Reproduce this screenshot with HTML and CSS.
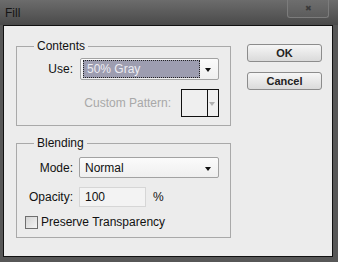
FILE: index.html
```html
<!DOCTYPE html>
<html lang="en">
<head>
  <meta charset="UTF-8" />
  <title>Fill</title>
  <link rel="stylesheet" href="styles.css">
</head>
<body>
  <div class="window">
    <div class="titlebar">
      <span class="title">Fill</span>
      <div class="close-btn"><span class="close-x">&#x2716;</span></div>
    </div>

    <div class="client">
      <div class="left-col">
        <fieldset class="group group-contents">
          <legend>Contents</legend>
          <div class="row">
            <label class="lbl">Use:</label>
            <div class="dropdown use-select">
              <span class="selected">50% Gray</span>
              <span class="arrow"></span>
            </div>
          </div>
          <div class="row pattern-row">
            <label class="lbl disabled">Custom Pattern:</label>
            <div class="pattern-box">
              <div class="swatch"></div>
              <div class="pattern-arrow"><span class="arrow grey"></span></div>
            </div>
          </div>
        </fieldset>

        <fieldset class="group group-blending">
          <legend>Blending</legend>
          <div class="row">
            <label class="lbl">Mode:</label>
            <div class="dropdown mode-select">
              <span class="value">Normal</span>
              <span class="arrow"></span>
            </div>
          </div>
          <div class="row opacity-row">
            <label class="lbl">Opacity:</label>
            <div class="textbox">100</div>
            <span class="unit">%</span>
          </div>
          <div class="check-row">
            <span class="checkbox"></span>
            <span>Preserve Transparency</span>
          </div>
        </fieldset>
      </div>

      <div class="right-col">
        <button class="btn">OK</button>
        <button class="btn">Cancel</button>
      </div>
    </div>
  </div>
</body>
</html>
```

FILE: styles.css
```css
* {
  box-sizing: border-box;
  margin: 0;
  padding: 0;
}

body {
  font-family: "Liberation Sans", Arial, sans-serif;
  font-size: 12px;
  background: #555;
}

.window {
  width: 338px;
  height: 262px;
  background: #575757;
  display: flex;
  flex-direction: column;
}

/* title bar */
.titlebar {
  height: 25px;
  background: linear-gradient(#6c6c6c, #4a4a4a);
  display: flex;
  justify-content: space-between;
  align-items: flex-start;
}

.title {
  color: #151515;
  font-size: 12px;
  padding: 6px 0 0 5px;
}

.close-btn {
  width: 42px;
  height: 18px;
  margin-right: 9px;
  background: linear-gradient(#6e6e6e, #5c5c5c);
  border: 1px solid #7c7c7c;
  border-top: none;
  border-radius: 0 0 3px 3px;
  display: flex;
  align-items: center;
  justify-content: center;
}

.close-x {
  color: #3a3a3a;
  font-size: 8px;
  line-height: 8px;
}

/* dialog body */
.client {
  margin: 0 5px 5px 3px;
  height: 232px;
  border: 1px solid #111;
  background: #ececec;
  display: flex;
}

.left-col {
  padding: 13px 0 0 12px;
}

.group {
  width: 215px;
  border: 1px solid #a9a9a9;
  padding: 0 10px 0 0;
}

.group legend {
  margin-left: 17px;
  padding: 0 3px;
  line-height: 14px;
  color: #111;
}

.group-contents {
  padding-top: 5px;
  padding-bottom: 8px;
}

.group-blending {
  margin-top: 10px;
  padding-top: 7px;
  padding-bottom: 8px;
}

.row {
  display: flex;
  align-items: center;
}

.lbl {
  width: 56px;
  margin-right: 6px;
  text-align: right;
  color: #111;
}

.group-contents .lbl {
  margin-right: 7px;
}

.lbl.disabled {
  width: auto;
  margin-left: auto;
  margin-right: 10px;
  color: #a8a8a8;
}

.dropdown {
  height: 22px;
  border: 1px solid #a2a2a2;
  border-radius: 2px;
  background: linear-gradient(#fbfbfb, #efefef);
  display: flex;
  align-items: center;
  position: relative;
}

.use-select {
  width: 139px;
  padding: 0 2px;
}

.mode-select {
  width: 140px;
  height: 21px;
}

.selected {
  width: 117px;
  height: 18px;
  line-height: 16px;
  padding-left: 3px;
  background: #9d9db0;
  color: #ececf2;
  border: 1px dotted #222;
}

.value {
  padding-left: 5px;
  color: #111;
}

.arrow {
  position: absolute;
  right: 7px;
  top: 9px;
  width: 0;
  height: 0;
  border-left: 3px solid transparent;
  border-right: 3px solid transparent;
  border-top: 4px solid #111;
}

.arrow.grey {
  border-top-color: #b0b0b0;
  right: 3px;
  top: 12px;
}

.pattern-row {
  margin-top: 9px;
  padding-right: 1px;
}

.pattern-box {
  width: 38px;
  height: 28px;
  border: 1px solid #111;
  display: flex;
}

.swatch {
  flex: 1;
  border-right: 1px solid #111;
  background: #efefef;
}

.pattern-arrow {
  width: 10px;
  position: relative;
  background: #efefef;
}

.opacity-row {
  margin-top: 9px;
}

.textbox {
  width: 67px;
  height: 20px;
  border: 1px solid #d6d6d6;
  background: #f3f3f3;
  padding-left: 5px;
  line-height: 18px;
  color: #111;
}

.unit {
  margin-left: 7px;
  color: #111;
}

.check-row {
  margin: 8px 0 0 8px;
  display: flex;
  align-items: center;
  gap: 3px;
  color: #111;
}

.checkbox {
  width: 13px;
  height: 13px;
  border: 1px solid #6e6e6e;
  background: linear-gradient(135deg, #d4d4d4, #f4f4f4);
}

/* buttons */
.right-col {
  margin-left: 16px;
  padding-top: 18px;
  display: flex;
  flex-direction: column;
  gap: 10px;
}

.btn {
  width: 75px;
  height: 18px;
  font-family: "Liberation Sans", Arial, sans-serif;
  font-size: 11px;
  font-weight: bold;
  color: #222;
  border: 1px solid #8c8c8c;
  border-radius: 3px;
  background: linear-gradient(#f6f6f6, #dadada);
}
```
